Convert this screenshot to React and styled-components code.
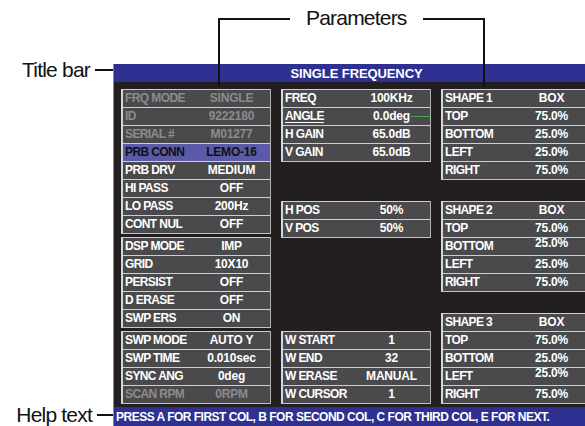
import React from "react";
import styled, { createGlobalStyle } from "styled-components";

const Global = createGlobalStyle`
  html, body {
    margin: 0;
    padding: 0;
    background: #fff;
    overflow: hidden;
  }
  body {
    font-family: "Liberation Sans", Arial, sans-serif;
  }
`;

const Figure = styled.div`
  position: relative;
  width: 585px;
  height: 426px;
  overflow: hidden;
  padding: 64px 0 0 113px;
  box-sizing: border-box;
`;

const Screen = styled.div`
  width: 486px;
  height: 362px;
  background: #231f20;
  border-left: 1px solid #8a8a8a;
  box-sizing: border-box;
  display: flex;
  flex-direction: column;
`;

const TitleBar = styled.div`
  height: 18px;
  flex: none;
  background: #2e3192;
  color: #fff;
  font-weight: bold;
  font-size: 13px;
  line-height: 19px;
  text-align: center;
  letter-spacing: -0.1px;
`;

const Body = styled.div`
  flex: 1;
  display: flex;
  gap: 10px;
  padding: 7px 0 0 7px;
`;

const Column = styled.div`
  width: 150px;
  display: flex;
  flex-direction: column;
`;

const Group = styled.div`
  margin-top: ${(p) => p.$top || 0}px;
  border-left: 2px solid #d6d6d6;
  border-right: 1px solid #b0b0b0;
  border-bottom: 1px solid #c4c4c4;
`;

const Row = styled.div`
  position: relative;
  height: 17px;
  border-top: 1px solid #cfcfcf;
  display: grid;
  grid-template-columns: 72px 1fr;
  align-items: center;
  background: ${(p) => (p.$active ? "#5b5aa8" : "#4a4a4c")};
  color: ${(p) => (p.$active ? "#111" : p.$dim ? "#8c8c8c" : "#fff")};
  font-weight: bold;
  font-size: 12px;
  letter-spacing: -0.6px;
  line-height: 17px;
  white-space: nowrap;
`;

const Label = styled.span`
  padding-left: 2px;
  text-decoration: ${(p) => (p.$underline ? "underline" : "none")};
  text-underline-offset: 2px;
`;

const Value = styled.span`
  text-align: center;
  padding-right: 2px;
  letter-spacing: -0.2px;
  transform: translateY(${(p) => (p.$raise ? -3 : 0)}px);
`;

const Cursor = styled.span`
  position: absolute;
  right: 0;
  top: 8px;
  width: 19px;
  height: 1px;
  background: #3fae49;
`;

const HelpBar = styled.div`
  height: 19px;
  flex: none;
  margin-top: 3px;
  background: #2e3192;
  color: #fff;
  font-weight: bold;
  font-size: 12px;
  letter-spacing: -0.5px;
  line-height: 20px;
  padding-left: 2px;
  white-space: nowrap;
`;

const Callout = styled.div`
  position: absolute;
  left: 0;
  top: ${(p) => p.$y - 13}px;
  width: 113px;
  height: 26px;
  display: flex;
  align-items: center;
  justify-content: flex-end;
  gap: 5px;
  font-size: 21px;
  letter-spacing: -0.8px;
  color: #111;
`;

const Lead = styled.span`
  width: ${(p) => p.$w}px;
  height: 2px;
  background: #111;
`;

const Bracket = styled.div`
  position: absolute;
  left: 218px;
  top: 18px;
  width: 267px;
  height: 69px;
  box-sizing: border-box;
  border: 2px solid #111;
  border-bottom: none;
`;

const BracketLabel = styled.span`
  position: absolute;
  left: 70px;
  top: -15px;
  padding: 0 16px;
  background: #fff;
  font-size: 21px;
  letter-spacing: -0.8px;
  line-height: 26px;
  color: #111;
`;

const columns = [
  [
    {
      top: 0,
      rows: [
        ["FRQ MODE", "SINGLE", { dim: true }],
        ["ID", "9222180", { dim: true }],
        ["SERIAL #", "M01277", { dim: true }],
        ["PRB CONN", "LEMO-16", { active: true }],
        ["PRB DRV", "MEDIUM"],
        ["HI PASS", "OFF"],
        ["LO PASS", "200Hz"],
        ["CONT NUL", "OFF"],
      ],
    },
    {
      top: 3,
      rows: [
        ["DSP MODE", "IMP"],
        ["GRID", "10X10"],
        ["PERSIST", "OFF"],
        ["D ERASE", "OFF"],
        ["SWP ERS", "ON"],
      ],
    },
    {
      top: 3,
      rows: [
        ["SWP MODE", "AUTO Y"],
        ["SWP TIME", "0.010sec"],
        ["SYNC ANG", "0deg"],
        ["SCAN RPM", "0RPM", { dim: true }],
      ],
    },
  ],
  [
    {
      top: 0,
      rows: [
        ["FREQ", "100KHz"],
        ["ANGLE", "0.0deg", { underline: true, cursor: true }],
        ["H GAIN", "65.0dB"],
        ["V GAIN", "65.0dB"],
      ],
    },
    {
      top: 39,
      rows: [
        ["H POS", "50%"],
        ["V POS", "50%"],
      ],
    },
    {
      top: 93,
      rows: [
        ["W START", "1"],
        ["W END", "32"],
        ["W ERASE", "MANUAL"],
        ["W CURSOR", "1"],
      ],
    },
  ],
  [
    {
      top: 0,
      rows: [
        ["SHAPE 1", "BOX"],
        ["TOP", "75.0%"],
        ["BOTTOM", "25.0%"],
        ["LEFT", "25.0%"],
        ["RIGHT", "75.0%"],
      ],
    },
    {
      top: 21,
      rows: [
        ["SHAPE 2", "BOX"],
        ["TOP", "75.0%"],
        ["BOTTOM", "25.0%", { raise: true }],
        ["LEFT", "25.0%"],
        ["RIGHT", "75.0%"],
      ],
    },
    {
      top: 21,
      rows: [
        ["SHAPE 3", "BOX"],
        ["TOP", "75.0%"],
        ["BOTTOM", "25.0%"],
        ["LEFT", "25.0%", { raise: true }],
        ["RIGHT", "75.0%"],
      ],
    },
  ],
];

export default function App() {
  return (
    <>
      <Global />
      <Figure>
        <Screen>
          <TitleBar>SINGLE FREQUENCY</TitleBar>
          <Body>
            {columns.map((groups, ci) => (
              <Column key={ci}>
                {groups.map((g, gi) => (
                  <Group key={gi} $top={g.top}>
                    {g.rows.map(([label, value, opt = {}], ri) => (
                      <Row key={ri} $dim={opt.dim} $active={opt.active}>
                        <Label $underline={opt.underline}>{label}</Label>
                        <Value $raise={opt.raise}>{value}</Value>
                        {opt.cursor && <Cursor />}
                      </Row>
                    ))}
                  </Group>
                ))}
              </Column>
            ))}
          </Body>
          <HelpBar>
            PRESS A FOR FIRST COL, B FOR SECOND COL, C FOR THIRD COL, E FOR NEXT.
          </HelpBar>
        </Screen>

        <Callout $y={70}>
          Title bar
          <Lead $w={18} />
        </Callout>
        <Callout $y={415}>
          Help text
          <Lead $w={16} />
        </Callout>
        <Bracket>
          <BracketLabel>Parameters</BracketLabel>
        </Bracket>
      </Figure>
    </>
  );
}
